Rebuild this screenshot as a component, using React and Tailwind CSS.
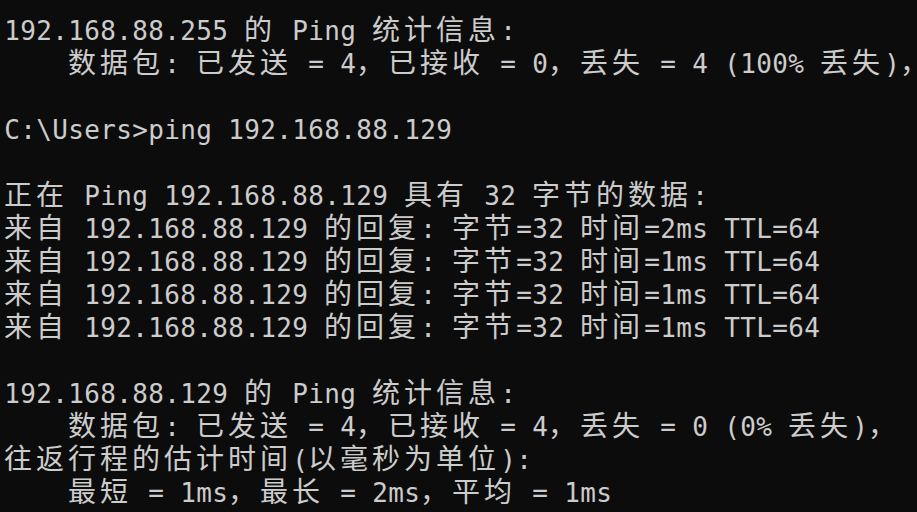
const lines = [
  "192.168.88.255 的 Ping 统计信息:",
  "    数据包: 已发送 = 4，已接收 = 0，丢失 = 4 (100% 丢失)，",
  "",
  "C:\\Users>ping 192.168.88.129",
  "",
  "正在 Ping 192.168.88.129 具有 32 字节的数据:",
  "来自 192.168.88.129 的回复: 字节=32 时间=2ms TTL=64",
  "来自 192.168.88.129 的回复: 字节=32 时间=1ms TTL=64",
  "来自 192.168.88.129 的回复: 字节=32 时间=1ms TTL=64",
  "来自 192.168.88.129 的回复: 字节=32 时间=1ms TTL=64",
  "",
  "192.168.88.129 的 Ping 统计信息:",
  "    数据包: 已发送 = 4，已接收 = 4，丢失 = 0 (0% 丢失)，",
  "往返行程的估计时间(以毫秒为单位):",
  "    最短 = 1ms，最长 = 2ms，平均 = 1ms",
];

// wide (CJK / fullwidth) chars take two terminal cells
const isWide = (ch) => ch.charCodeAt(0) >= 0x2e80;

function TermLine({ text }) {
  return (
    <div className="h-[33px] whitespace-pre text-[28px] leading-[33px] font-[family-name:'Noto_Sans_CJK_SC',sans-serif]">
      {[...text].map((ch, i) =>
        isWide(ch) ? (
          <span key={i} className="inline-block w-8 text-left">
            {ch}
          </span>
        ) : (
          <span
            key={i}
            className="inline-block w-4 text-center text-[26px] leading-none font-[family-name:'DejaVu_Sans_Mono',monospace]"
          >
            {ch}
          </span>
        )
      )}
    </div>
  );
}

export default function App() {
  return (
    <div className="w-full h-screen overflow-hidden bg-[#0c0c0c] text-[#cccccc] pl-1 pt-3">
      {lines.map((l, i) => (
        <TermLine key={i} text={l} />
      ))}
    </div>
  );
}
